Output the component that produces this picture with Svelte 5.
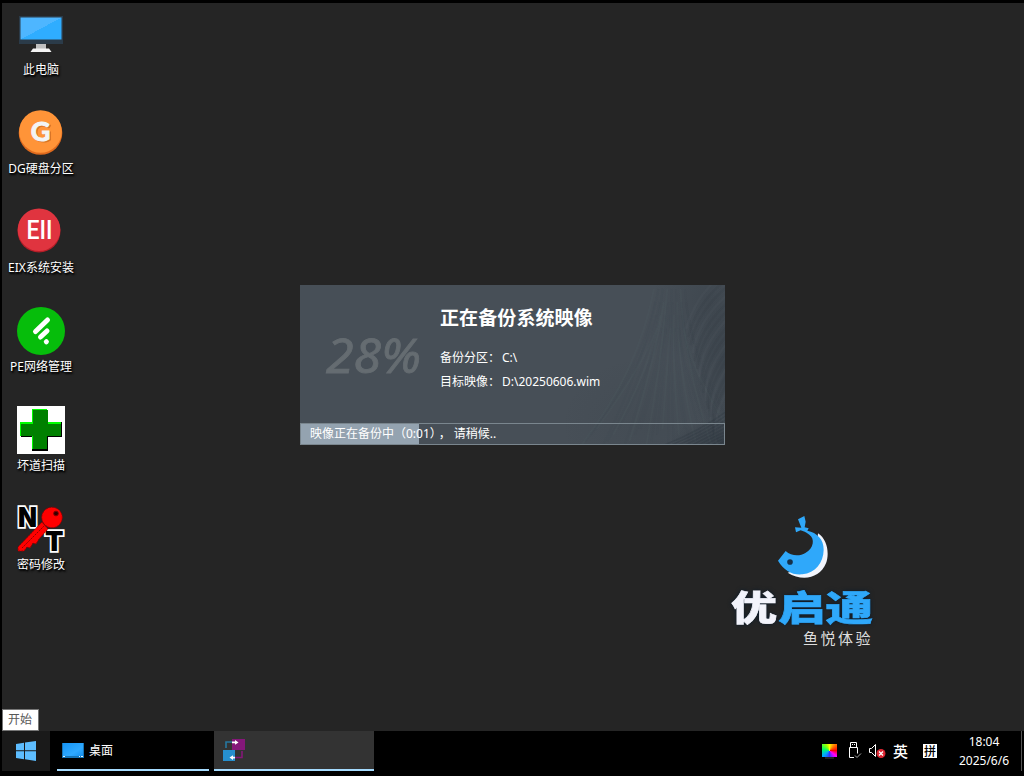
<script>
  const icons = [
    { id: 'pc', label: '此电脑' },
    { id: 'dg', label: 'DG硬盘分区' },
    { id: 'eix', label: 'EIX系统安装' },
    { id: 'net', label: 'PE网络管理' },
    { id: 'scan', label: '坏道扫描' },
    { id: 'key', label: '密码修改' }
  ];
  const percent = 28;
  const strands = Array.from({ length: 30 }, (_, i) => {
    const end = 280 + i * 5.5;
    return `M${end} ${162 - (i % 4) * 6} Q${338 + i * 1.9} ${88 - (i % 5) * 3} ${354 + i * 1.1} ${4 + (i % 4) * 13}`;
  });
  const curls = Array.from({ length: 16 }, (_, i) =>
    `M427 ${-14 + i * 8} Q${396 + i * 0.8} ${8 + i * 9} ${386 + i * 2.2} ${44 + i * 8}`
  );
  const lower = Array.from({ length: 9 }, (_, i) => `M${362 + i * 7} 161 Q${400 + i * 3} ${146 + i} 427 ${126 + i * 4}`);
</script>

<div class="screen">
  <main class="desktop">
    <div class="icons">
      {#each icons as icon}
        <div class="icon">
          <svg width="48" height="48" viewBox="0 0 48 48">
            {#if icon.id === 'pc'}
              <defs><linearGradient id="blue" x1="0" y1="0" x2="1" y2="1"><stop offset=".5" stop-color="#4eb6ff" /><stop offset=".5" stop-color="#2fadff" /></linearGradient></defs>
              <path fill="#2b3b49" d="M2 6h44v28H2z" />
              <path fill="url(#blue)" d="M3.5 7.5h41v22h-41z" />
              <path fill="#bfbfbf" d="M19 34h10v5H19z" />
              <path fill="#f4f4f4" d="M16 38.5h16l2.5 3.5h-21z" />
            {:else if icon.id === 'dg'}
              <circle cx="23.5" cy="24" r="21.8" fill="#df6a1d" />
              <circle cx="23.5" cy="22.5" r="21.3" fill="#ff9438" />
              <text class="g shade" x="25" y="33" text-anchor="middle">G</text>
              <text class="g" x="23.5" y="31.5" text-anchor="middle">G</text>
            {:else if icon.id === 'eix'}
              <circle cx="22" cy="23" r="21.5" fill="#b51e28" />
              <circle cx="22" cy="21.7" r="21.3" fill="#e0343f" />
              <text class="eii" x="9.5" y="30.5" textLength="26" lengthAdjust="spacingAndGlyphs">EII</text>
            {:else if icon.id === 'net'}
              <circle cx="24" cy="24" r="24" fill="#06bd0b" />
              <g stroke="#fff" stroke-width="5" stroke-linecap="round"><path d="M18.5 24.5 30.5 13M23.5 30l6.5-6M29.3 34.8l.1-.1" /></g>
            {:else if icon.id === 'scan'}
              <path fill="#fff" d="M0 0h48v48H0z" />
              <path fill="#000" d="M16 4h15v12h14v15H31v14H15V31H4V17h12z" />
              <path fill="#0f0" d="M15 3h15v13h14v2H30v25H15V30H3V16h12z" />
              <path fill="#008000" d="M16 4h15v14h13v12H30v13H16V30H4V18h12z" />
            {:else}
              <text class="nt" x="1" y="21.5" textLength="19" lengthAdjust="spacingAndGlyphs">N</text>
              <text class="nt" x="28" y="46" textLength="18.5" lengthAdjust="spacingAndGlyphs">T</text>
              <g stroke="#900000" stroke-dasharray="2 1">
                <path fill="red" d="M25 17 1 42v4h6l3-4 3 1 3-5 3 1 3-5 9-10z" />
                <circle cx="35" cy="12.5" r="10.3" fill="red" />
              </g>
              <path d="M5 43 27 21" stroke="#900000" stroke-dasharray="2 1" />
              <circle cx="39" cy="8.5" r="2.4" fill="#300" stroke="#900000" />
            {/if}
          </svg>
          <span>{icon.label}</span>
        </div>
      {/each}
    </div>

    <section class="dialog">
      <svg class="fur" width="425" height="160" viewBox="0 0 425 160">
        <defs>
          <radialGradient id="dark"><stop stop-color="#252e36" stop-opacity=".55" /><stop offset="1" stop-color="#252e36" stop-opacity="0" /></radialGradient>
        </defs>
        <ellipse cx="408" cy="15" rx="55" ry="70" fill="url(#dark)" opacity=".4" />
        <ellipse cx="425" cy="80" rx="40" ry="80" fill="url(#dark)" opacity=".55" />
        <ellipse cx="350" cy="140" rx="90" ry="70" fill="url(#dark)" opacity=".2" />
        <ellipse cx="425" cy="157" rx="55" ry="24" fill="url(#dark)" opacity=".9" />
        <g fill="none">
          {#each strands as d, i}<path {d} stroke={i % 3 ? '#38434c' : '#5b6770'} stroke-width="2" opacity=".1" />{/each}
          {#each curls as d, i}<path {d} stroke={i % 3 ? '#2c363f' : '#5b6770'} stroke-width="2.4" opacity=".13" />{/each}
          {#each lower as d}<path {d} stroke="#252e36" stroke-width="1.5" opacity=".2" />{/each}
        </g>
      </svg>
      <div class="content">
        <div class="percent">
          <svg width="120" height="66" viewBox="0 0 120 66"><text x="6" y="49" textLength="95" lengthAdjust="spacingAndGlyphs">{percent}%</text></svg>
        </div>
        <div class="details">
          <h1>正在备份系统映像</h1>
          <p><span>备份分区：</span>C:\</p>
          <p><span>目标映像：</span>D:\20250606.wim</p>
        </div>
      </div>
      <div class="progress">
        <div class="fill" style="width:{percent}%"></div>
        <span class="status">映像正在备份中（0:01<span class="mark">），</span>请稍候..</span>
      </div>
    </section>

    <div class="brand">
      <svg width="54" height="66" viewBox="168 26 162 198">
        <path fill="#f2f5fc" d="M294 84C322 102 329 144 318 174C300 219 247 230 203 202L285 177Z" />
        <path fill="#2fa8fa" d="M174 166 197 137C214 153 240 153 256 143C282 128 285 100 268 88C258 80 250 78 242 75L228 81 225 66 244 67 234 42 253 32 257 49 254 66 266 69 262 76C291 82 312 102 311 134C310 173 286 203 247 207C217 210 192 196 174 166Z" />
        <circle cx="210" cy="170" r="8.5" fill="#15304a" />
      </svg>
      <svg class="name" width="144" height="42" viewBox="0 0 144 42">
        <text x="1" y="34" textLength="46" lengthAdjust="spacingAndGlyphs" fill="#f2f3fb" stroke="#f2f3fb">优</text>
        <text x="48" y="34" textLength="95" lengthAdjust="spacingAndGlyphs" fill="#2fa8fa" stroke="#2fa8fa">启通</text>
      </svg>
      <div class="slogan">鱼悦体验</div>
    </div>
    <div class="tooltip">开始</div>
  </main>

  <footer class="taskbar">
    <div class="start">
      <svg width="20" height="20" viewBox="0 0 20 20"><path fill="#5dbdff" d="M0 3 8 1.8V9.3H0zM9 1.6 20 0v9.3H9zM0 10.3h8v7.9L0 17zM9 10.3h11V20L9 18.3z" /></svg>
    </div>
    <div class="task first">
      <svg width="22" height="17" viewBox="0 0 22 17"><defs><linearGradient id="desk" x1="0" y1="0" x2="1" y2="1"><stop offset="0" stop-color="#1594f5" /><stop offset=".65" stop-color="#2fa9ff" /><stop offset="1" stop-color="#148ff0" /></linearGradient></defs><path fill="#1474b8" d="M0 1h22v15H0z" /><path fill="url(#desk)" d="M1 1h20v13H1z" /><path d="M1 14.5h2M17 14.5h1M19 14.5h2" stroke="#d9f2ff" /></svg>
      <span>桌面</span>
    </div>
    <div class="task active">
      <svg width="24" height="24" viewBox="0 0 24 24">
        <path fill="#851779" d="M10 1h13v11H10z" /><path fill="#268fce" d="M1 12h12v11H1z" />
        <path fill="none" stroke="#2677a0" stroke-width="1.6" d="M4 10V4h6" /><path fill="none" stroke="#851779" stroke-width="1.6" d="M20 13v6.5h-7" />
        <path fill="#fff" d="M10 3.4h3V2l3.5 2.4L13 6.8V5.2h-3zM13 18.8h-2v-1.6l-3.5 2.4L11 22v-1.6h2z" />
      </svg>
    </div>
    <div class="tray">
      <div class="monitor"><i></i><b></b></div>
      <svg class="usb" width="14" height="18" viewBox="0 0 14 18" fill="none" stroke="#fff"><path d="M2.5 5.5v-5h6v5M1.5 5.5h8v6M1.5 5.5v10h4.5M4.5 2v1M6.5 2v1" /><path d="m7 13.5 2 2 4-4" stroke="#aaa" /></svg>
      <svg class="sound" width="17" height="16" viewBox="0 0 17 16"><path d="M.5 5.5h2l4-4v12l-4-4h-2z" fill="none" stroke="#fff" /><circle cx="12" cy="10.5" r="4.5" fill="#dc2632" /><path d="m10 8.5 4 4m0-4-4 4" stroke="#fff" stroke-width="1.3" /></svg>
      <span class="lang">英</span>
      <span class="ime">拼</span>
      <div class="clock"><span>18:04</span><span>2025/6/6</span></div>
      <div class="edge"></div>
    </div>
  </footer>
</div>

<style>
  :global(body) { margin: 0; background: #000; overflow: hidden; }
  .screen { box-sizing: border-box; width: 1024px; height: 776px; padding: 3px 0 0 2px; background: #000; color: #fff; font: 12px/16px "Noto Sans", "Noto Sans CJK SC", sans-serif; display: flex; flex-direction: column; }
  .desktop { position: relative; height: 728px; background: #252525; flex: none; }
  .icons { padding-top: 7px; width: 78px; display: flex; flex-direction: column; }
  .icon { height: 99px; display: flex; flex-direction: column; align-items: center; }
  .icon svg { flex: none; overflow: visible; }
  .icon span { margin-top: 4px; white-space: nowrap; text-shadow: 1px 1px 2px #000, 1px 2px 2px #000; }
  .g { font: 700 27px Lato, sans-serif; fill: #f2f4f5; stroke: #f2f4f5; stroke-width: 1; }
  .g.shade { fill: #bd601e; stroke: #bd601e; opacity: .6; }
  .eii { font: 500 25px Roboto, sans-serif; fill: #fff; }
  .nt { font: 900 27px Inter, sans-serif; fill: #000; stroke: #fff; stroke-width: 3.5; paint-order: stroke; }
  .dialog { position: absolute; left: 298px; top: 282px; width: 425px; height: 160px; background: #474f57; display: flex; flex-direction: column; }
  .fur { position: absolute; inset: 0; }
  .content { position: relative; display: flex; height: 138px; }
  .percent { width: 140px; padding: 39px 0 0 20px; box-sizing: border-box; }
  .percent svg { overflow: visible; }
  .percent text { font: italic 47px "Noto Sans", sans-serif; fill: #656c71; stroke: #656c71; stroke-width: .8; }
  .details { padding-top: 20px; }
  h1 { margin: 0 0 17px; font: bold 19px/24px "Noto Sans CJK SC", sans-serif; letter-spacing: .1px; }
  p { display: flex; margin: 0; height: 24px; line-height: 24px; }
  p span { width: 62px; }
  .progress { position: relative; box-sizing: border-box; height: 22px; border: 1px solid #7a868e; display: grid; }
  .fill { grid-area: 1/1; background: #94a3b0; height: 20px; }
  .status { grid-area: 1/1; position: relative; padding-left: 9px; line-height: 20px; white-space: nowrap; }
  .mark { letter-spacing: 3px; }
  .brand { position: absolute; left: 728px; top: 511px; width: 144px; display: flex; flex-direction: column; align-items: flex-start; }
  .brand > svg:first-child { margin-left: 46px; }
  .name { margin-top: 7px; font: 900 35px "Noto Sans CJK SC", sans-serif; stroke-width: .6; filter: drop-shadow(0 0 2px #0a1a2a); overflow: visible; }
  .slogan { margin: -1px 0 0 73px; font: 15px/20px "Noto Sans CJK SC", sans-serif; letter-spacing: 2.5px; color: #ddd; white-space: nowrap; }
  .tooltip { position: absolute; left: 0; bottom: 0; box-sizing: border-box; width: 37px; height: 22px; background: #fff; border: 1px solid #767676; color: #575757; padding-left: 5px; line-height: 20px; }
  .taskbar { height: 45px; display: flex; align-items: flex-start; }
  .start { width: 48px; height: 40px; background: #1a1a1a; display: flex; align-items: center; justify-content: center; }
  .task { box-sizing: border-box; height: 40px; border-bottom: 2px solid #a6dcff; display: flex; align-items: center; gap: 5px; }
  .task span { padding-top: 2px; }
  .first { margin-left: 7px; width: 152px; padding-left: 5px; }
  .active { margin-left: 5px; width: 160px; background: #333; padding-left: 8px; }
  .tray { margin-left: auto; display: flex; height: 40px; align-items: center; }
  .monitor { width: 15px; display: flex; flex-direction: column; align-items: center; margin-right: 11px; }
  .monitor i { width: 15px; height: 13px; background: conic-gradient(#ff0, #f70, red 90deg, #f0f 130deg, #33f 180deg, #0af 230deg, #0f6 280deg, #9f0 330deg, #ff0); }
  .monitor b { width: 9px; height: 2px; background: #202020; }
  .usb { margin-right: 7px; }
  .sound { margin-right: 7px; }
  .lang { width: 15px; font: 500 15px/20px "Noto Sans CJK SC", sans-serif; margin-right: 15px; }
  .ime { width: 14px; height: 14px; background: #fff; color: #000; font: 500 12px/14px "Noto Sans CJK SC", sans-serif; padding-left: 1px; box-sizing: border-box; margin-right: 11px; }
  .clock { width: 72px; display: flex; flex-direction: column; text-align: center; line-height: 19px; }
  .edge { width: 1px; height: 40px; background: #555; margin: 0 2px 0 1px; }
</style>
